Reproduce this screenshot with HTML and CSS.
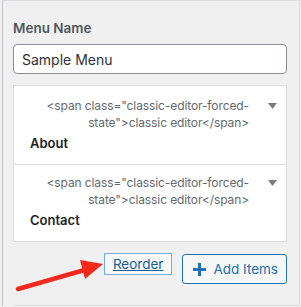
FILE: index.html
```html
<!DOCTYPE html>
<html lang="en">
    <head>
        <meta charset="UTF-8">
        <title>Menu</title>
        <link rel="stylesheet" href="styles.css">
    </head>
<body>

<div class="panel">
    <label class="field-label" for="menuName">Menu Name</label>
    <input class="field-input" type="text" id="menuName" value="Sample Menu">

    <ul class="menu-items">
        <li class="menu-item">
            <div class="item-head">
                <span class="item-type">&lt;span class="classic-editor-forced-state"&gt;classic editor&lt;/span&gt;</span>
                <svg class="item-toggle" width="9" height="6" viewBox="0 0 9 6"><path d="M0 0h9L4.5 6z" fill="#787c82"/></svg>
            </div>
            <div class="item-title">About</div>
        </li>
        <li class="menu-item">
            <div class="item-head">
                <span class="item-type">&lt;span class="classic-editor-forced-state"&gt;classic editor&lt;/span&gt;</span>
                <svg class="item-toggle" width="9" height="6" viewBox="0 0 9 6"><path d="M0 0h9L4.5 6z" fill="#787c82"/></svg>
            </div>
            <div class="item-title">Contact</div>
        </li>
    </ul>

    <div class="actions">
        <button class="reorder-btn" type="button">Reorder</button>
        <button class="add-btn" type="button">
            <svg width="13" height="13" viewBox="0 0 13 13"><path d="M5 0h3v5h5v3H8v5H5V8H0V5h5z" fill="#2271b1"/></svg>
            Add Items
        </button>
    </div>

    <div class="next-section"></div>

    <!-- annotation arrow -->
    <svg class="callout" width="100" height="40" viewBox="0 0 100 40">
        <path d="M3 34 L73 14" stroke="#f5281c" stroke-width="4.5" stroke-linecap="round"/>
        <path d="M65 5 L88 9 L70 24 z" fill="#f5281c"/>
    </svg>
</div>

</body>
</html>
```

FILE: styles.css
```css
body {
    margin: 0;
    background: #f0f0f1;
    font-family: Inter, "Noto Sans", sans-serif;
    color: #2c3338;
}
.panel {
    position: relative;
    margin-left: 2px;
    height: 306px;
    border-top: 1px solid #dcdcde;
    border-left: 1px solid #c3c4c7;
    border-right: 1px solid #dcdcde;
    padding: 17px 12px 0 10px;
    box-sizing: border-box;
    width: 298px;
}
.field-label {
    display: block;
    font-size: 13.5px;
    font-weight: 600;
    line-height: 20px;
    color: #50575e;
    margin-bottom: 6px;
}
.field-input {
    display: block;
    width: 100%;
    height: 30px;
    box-sizing: border-box;
    border: 1px solid #8c8f94;
    border-radius: 4px;
    padding: 0 8px;
    font-family: inherit;
    font-size: 14px;
    color: #2c3338;
    background: #fff;
}
.menu-items {
    list-style: none;
    margin: 11px 0 0;
    padding: 0;
    background: #fff;
    border: 1px solid #dcdcde;
}
.menu-item {
    padding: 11px 9px 11px 16px;
}
.menu-item + .menu-item {
    border-top: 1px solid #dcdcde;
    padding-top: 9px;
}
.item-head {
    display: flex;
    align-items: flex-start;
    justify-content: flex-end;
}
.item-type {
    width: 210px;
    text-align: right;
    font-size: 12px;
    line-height: 17px;
    letter-spacing: -0.1px;
    color: #646970;
}
.item-toggle {
    margin: 6px 0 0 19px;
}
.item-title {
    font-size: 13px;
    font-weight: 600;
    line-height: 20px;
    color: #1d2327;
    margin-top: 2px;
}
.actions {
    display: flex;
    justify-content: flex-end;
    align-items: flex-start;
    gap: 10px;
    margin-top: 11px;
}
.reorder-btn {
    height: 22px;
    padding: 0 8px;
    border: 1px solid #72aee6;
    background: #f6f7f7;
    color: #135e96;
    font-family: inherit;
    font-size: 13.5px;
    text-decoration: underline;
}
.add-btn {
    display: flex;
    align-items: center;
    gap: 7px;
    height: 30px;
    margin-top: 1px;
    padding: 0 8px 0 10px;
    border: 1px solid #2271b1;
    border-radius: 3px;
    background: #f6f7f7;
    color: #2271b1;
    font-family: inherit;
    font-size: 13.5px;
}
.next-section {
    position: absolute;
    left: 10px;
    right: 0;
    bottom: 0;
    border-top: 1px solid #dcdcde;
}
.callout {
    position: absolute;
    left: 12px;
    top: 254px;
}
```
